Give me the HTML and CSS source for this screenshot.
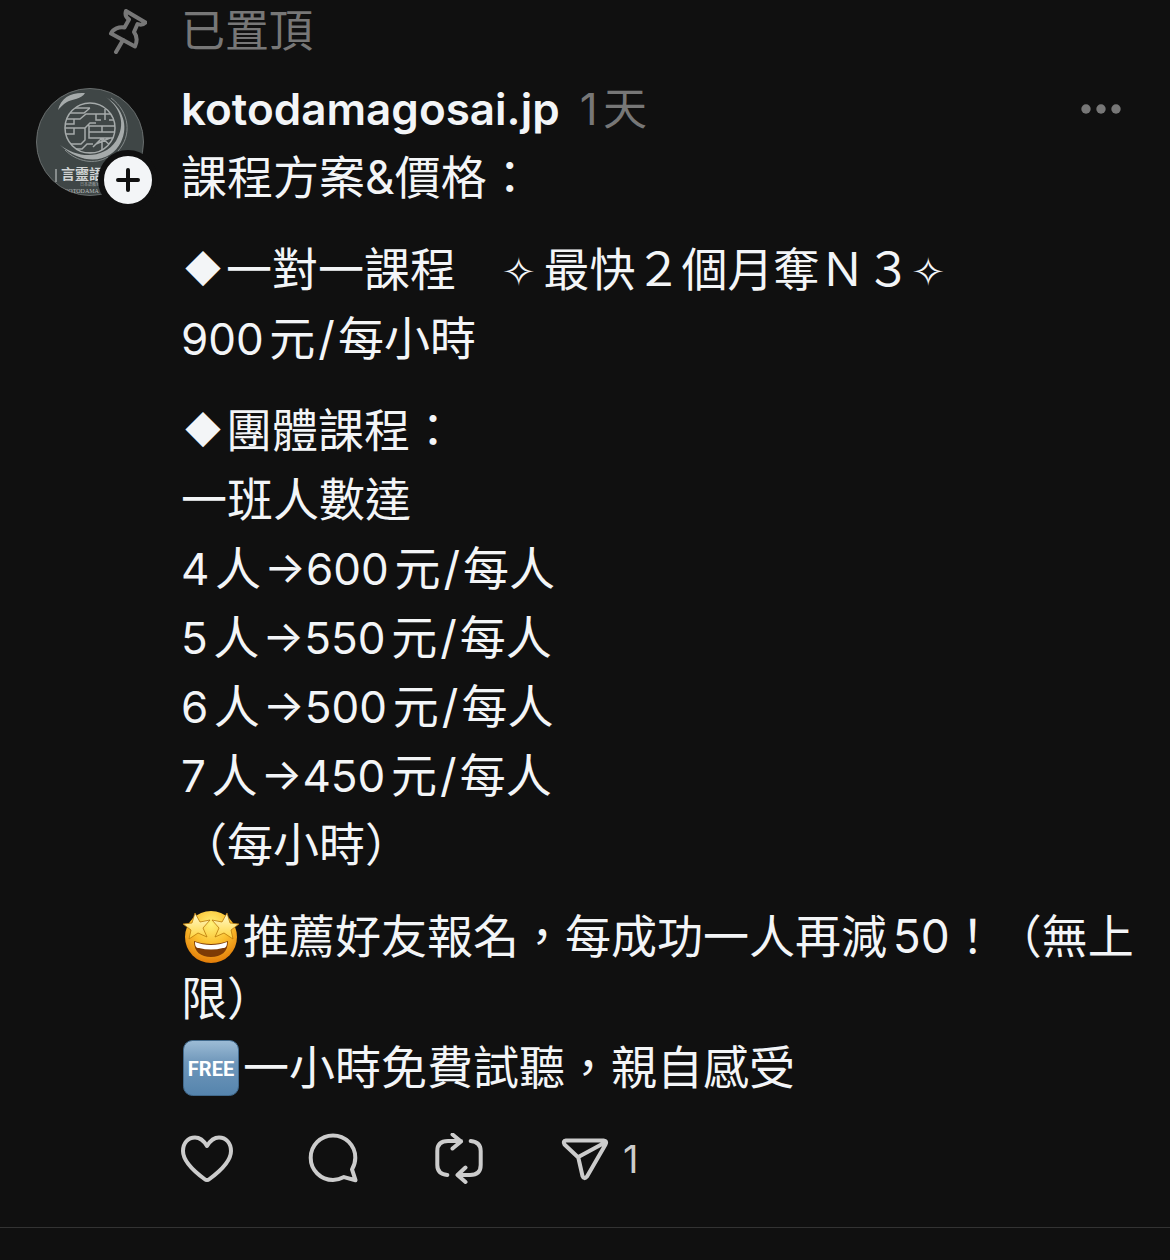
FILE: index.html
```html
<!DOCTYPE html>
<html lang="zh-Hant">
  <head>
    <meta charset="UTF-8" />
    <meta name="viewport" content="width=device-width, initial-scale=1.0" />
    <title>kotodamagosai.jp</title>
    <link rel="stylesheet" href="styles.css">
  </head>
  <body>
    <article class="post">
      <div class="pinned">
        <svg class="pin-icon" viewBox="0 0 40 46" aria-hidden="true">
          <path d="M19 3L38.500 14.500C36 17 33 17 30.500 16L27 24C30 28 30.500 33 28 38.500L4 25.500C6 21 12 18.500 17.500 19.500L22 11.500C19 9.500 18 6 19 3Z" />
          <path d="M16 32L9 44" />
        </svg>
        <span>已置頂</span>
      </div>

      <div class="avatar">
        <svg class="avatar-img" viewBox="0 0 108 108" aria-hidden="true">
          <defs>
            <clipPath id="face"><circle cx="54" cy="54" r="53.500" /></clipPath>
            <clipPath id="seal"><circle cx="54" cy="40" r="25" /></clipPath>
          </defs>
          <circle cx="54" cy="54" r="53.500" fill="#3f4646" stroke="#686d6d" />
          <g clip-path="url(#face)">
            <!-- brush stroke -->
            <path d="M22 22C25 9 36 4 49 5C46 11 36 11 31 14C27 16 25 19 22 22Z" fill="#a6abab" />
            <path d="M70 9C87 20 93 38 85 54C76 73 49 80 24 57C42 71 68 71 80 53C90 36 85 21 70 9Z" fill="#a6abab" />
            <path d="M75 10C94 24 96 48 82 63M29 62C41 74 59 77 72 69" fill="none" stroke="#858b8b" />
            <!-- seal -->
            <g clip-path="url(#seal)" fill="none" stroke="#a6abab" stroke-width="1.500">
              <path d="M36 20H54M28 25H48L54 20M28 31H44L50 26H64M28 36H38V31M28 40H49V52L45 56H28M49 40L54 35H60M28 46H38V40M60 26H78M69 21V32M60 26V32H65M78 26V32H73M53 38H80V44H53ZM66 38V44M53 44V50H80M66 50V64M66 50L57 59M66 50L76 59M60 56L74 50M30 61H46L51 56H57M36 65H58" />
            </g>
            <circle cx="54" cy="40" r="25" fill="none" stroke="#a6abab" stroke-width="1.500" />
            <path d="M20 81V94" stroke="#d0d3d3" />
            <text class="logo-name" x="25" y="91">言靈語</text>
            <text class="logo-small" x="44" y="98">日本語教室</text>
            <text class="logo-latin" x="28" y="105">KOTODAMA</text>
          </g>
        </svg>
        <button class="follow" type="button" aria-label="追蹤">
          <svg viewBox="0 0 24 24" aria-hidden="true"><path d="M12 2V22M2 12H22" /></svg>
        </button>
      </div>

      <div class="content">
        <header class="head">
          <a class="user" href="#">kotodamagosai.jp</a>
          <time class="time">1天</time>
          <button class="more" type="button" aria-label="更多">
            <svg viewBox="0 0 40 10" aria-hidden="true">
              <circle cx="5" cy="5" r="4.700" />
              <circle cx="20" cy="5" r="4.700" />
              <circle cx="35" cy="5" r="4.700" />
            </svg>
          </button>
        </header>

        <div class="text">
          <div class="block">
            <p class="title">課程方案&amp;價格：</p>
          </div>
          <div class="block">
            <p><span class="mark">◆</span>一對一課程　<span class="star">✧</span>最快２個月奪Ｎ３<span class="star">✧</span></p>
            <p><span class="num">900</span>元<span class="slash">/</span>每小時</p>
          </div>
          <div class="block">
            <p><span class="mark">◆</span>團體課程：</p>
            <p>一班人數達</p>
            <p><span class="num">4</span>人<span class="num arrow">→600</span>元<span class="slash">/</span>每人</p>
            <p><span class="num">5</span>人<span class="num arrow">→550</span>元<span class="slash">/</span>每人</p>
            <p><span class="num">6</span>人<span class="num arrow">→500</span>元<span class="slash">/</span>每人</p>
            <p><span class="num">7</span>人<span class="num arrow">→450</span>元<span class="slash">/</span>每人</p>
            <p>（每小時）</p>
          </div>
          <div class="block">
            <p><svg class="emoji" viewBox="0 0 56 56" role="img" aria-label="🤩">
              <defs>
                <radialGradient id="skin" cx="50%" cy="25%" r="75%">
                  <stop offset="0" stop-color="#fff27a" />
                  <stop offset="0.5" stop-color="#fbc02f" />
                  <stop offset="1" stop-color="#e27c08" />
                </radialGradient>
                <linearGradient id="gold" x1="0" y1="0" x2="0" y2="1">
                  <stop offset="0" stop-color="#fffbd0" />
                  <stop offset="1" stop-color="#ffd33a" />
                </linearGradient>
              </defs>
              <circle cx="28" cy="28" r="26" fill="url(#skin)" />
              <path d="M11 32C21 36 35 36 45 32C45 43 38 48 28 48S11 43 11 32Z" fill="#7c3a05" />
              <path d="M12 33C22 37 34 37 44 33C44 37 43 39 40 39C32 41 24 41 16 39C13 39 12 37 12 33Z" fill="#fff" />
              <g fill="url(#gold)" stroke="#b9780a" stroke-width="0.800" stroke-linejoin="round">
                <path d="M12 4L17 13L27 11L20 19L24 28L15 24L6 30L8 21L0 15L9 14Z" />
                <path d="M44 4L39 13L29 11L36 19L32 28L41 24L50 30L48 21L56 15L47 14Z" />
              </g>
            </svg>推薦好友報名，每成功一人再減50！（無上限）</p>
            <p><svg class="emoji" viewBox="0 0 56 56" role="img" aria-label="FREE">
              <defs>
                <linearGradient id="blue" x1="0" y1="0" x2="0" y2="1">
                  <stop offset="0" stop-color="#9dbcd6" />
                  <stop offset="0.4" stop-color="#6f97ba" />
                  <stop offset="1" stop-color="#5584ad" />
                </linearGradient>
              </defs>
              <rect x="0.500" y="0.500" width="55" height="55" rx="9" fill="url(#blue)" stroke="#41698c" />
              <text class="free" x="28" y="36" text-anchor="middle">FREE</text>
            </svg>一小時免費試聽，親自感受</p>
          </div>
        </div>

        <footer class="actions">
          <button type="button" aria-label="讚">
            <svg viewBox="0 0 52 52" aria-hidden="true">
              <path d="M26 13C23 8 19 4.500 14 4.500C7 4.500 2 10 2 18C2 29 14 39 23.500 46Q26 48 28.500 46C38 39 50 29 50 18C50 10 45 4.500 38 4.500C33 4.500 29 8 26 13Z" />
            </svg>
          </button>
          <button type="button" aria-label="回覆">
            <svg viewBox="0 0 52 52" aria-hidden="true">
              <path d="M37 44.100L48.500 47.200L45 36.400C47 33 48.300 29 48.300 24.700A22.300 22.300 0 1 0 26 47C30 47 33.500 46 37 44.100Z" />
            </svg>
          </button>
          <button type="button" aria-label="轉發">
            <svg viewBox="0 0 52 52" aria-hidden="true">
              <path d="M28 8H15Q4.300 8 4.300 18V32Q4.300 41 14.300 42M19.500 1.500L28 8.500L19.500 15.500M37.700 8Q47.700 9 47.700 18V32Q47.700 42 37 42H24.500M32.500 34.500L24.500 42L32.500 49" />
            </svg>
          </button>
          <button type="button" aria-label="分享">
            <svg viewBox="0 0 52 52" aria-hidden="true">
              <path d="M7 7.500H44.500Q48.500 8 46.500 11.500L28 43.500Q25 47 23.500 43L19.300 24.500L5.500 11.500Q3.500 8 7 7.500ZM19.300 24L46 9.500" />
            </svg>
            <span class="count">1</span>
          </button>
        </footer>
      </div>
    </article>
  </body>
</html>
```
FILE: styles.css
```css
* {
  box-sizing: border-box;
}

body {
  margin: 0;
  background-color: #101010;
  color: #f3f5f7;
  font-family: Inter, "Noto Sans CJK TC", sans-serif;
  font-size: 46px;
  line-height: 62px;
  text-autospace: normal;
  text-spacing-trim: space-all;
}

p {
  margin: 0;
}

button {
  padding: 0;
  border: none;
  background: none;
  color: inherit;
  font: inherit;
  cursor: pointer;
}

svg {
  display: block;
}

.post {
  display: grid;
  grid-template-columns: 111px minmax(0, 1fr);
  column-gap: 34px;
  padding: 0 24px 42px 36px;
  border-bottom: 1px solid #333;
}

/* Pinned row */
.pinned {
  grid-column: 1 / -1;
  display: grid;
  grid-template-columns: subgrid;
  align-items: center;
  margin-bottom: 16px;
  color: #777;
  font-size: 44px;
}

.pin-icon {
  justify-self: end;
  width: 40px;
  height: 46px;
  fill: none;
  stroke: #777;
  stroke-width: 4;
  stroke-linecap: round;
  stroke-linejoin: round;
}

/* Avatar */
.avatar {
  position: relative;
  width: 108px;
  height: 108px;
  margin-top: 10px;
}

.avatar-img {
  width: 100%;
}

.logo-name {
  fill: #d0d3d3;
  font-family: "Noto Sans CJK TC", sans-serif;
  font-size: 14px;
  font-weight: 700;
}

.logo-small {
  fill: #a6abab;
  font-size: 4px;
}

.logo-latin {
  fill: #b8bcbc;
  font-family: "Liberation Serif", serif;
  font-size: 6px;
}

.follow {
  position: absolute;
  right: -14px;
  bottom: -14px;
  display: flex;
  align-items: center;
  justify-content: center;
  width: 60px;
  height: 60px;
  border: 6px solid #101010;
  border-radius: 50%;
  background-color: #f3f5f7;
}

.follow svg {
  width: 24px;
  fill: none;
  stroke: #101010;
  stroke-width: 4;
  stroke-linecap: round;
}

/* Header */
.head {
  display: flex;
  align-items: center;
  gap: 20px;
  font-size: 44px;
}

.user {
  color: #f3f5f7;
  font-weight: 600;
  text-decoration: none;
}

.time {
  color: #777;
}

.more {
  margin-left: auto;
  padding: 0 25px;
}

.more svg {
  width: 40px;
  fill: #777;
}

/* Post text */
.text {
  display: flex;
  flex-direction: column;
  gap: 30px;
  margin-top: 6px;
}

.block {
  display: flex;
  flex-direction: column;
  gap: 7px;
}

.title {
  text-autospace: no-autospace;
}

.mark {
  padding: 0 5px 0 4px;
  font-family: "Noto Sans CJK TC", sans-serif;
  font-size: 36px;
  line-height: 1;
  vertical-align: 3px;
}

.star {
  margin-right: 8px;
  font-family: "DejaVu Sans", sans-serif;
  font-size: 40px;
  line-height: 1;
}

.num {
  font-size: 44px;
  line-height: 1;
}

.arrow {
  margin-left: 3px;
}

.slash {
  margin: 0 3px;
}

.emoji {
  display: inline-block;
  width: 56px;
  height: 56px;
  margin: 0 4px 0 2px;
  vertical-align: -12px;
}

.free {
  fill: #fff;
  font-family: Roboto, sans-serif;
  font-size: 20px;
  font-weight: 700;
}

/* Actions */
.actions {
  display: flex;
  gap: 74px;
  margin-top: 35px;
}

.actions button {
  display: flex;
  align-items: center;
  height: 52px;
}

.actions svg {
  width: 52px;
  height: 52px;
  fill: none;
  stroke: #ccc;
  stroke-width: 4;
  stroke-linecap: round;
  stroke-linejoin: round;
}

.count {
  margin-left: 12px;
  color: #ccc;
  font-size: 38px;
  font-weight: 400;
}
```
